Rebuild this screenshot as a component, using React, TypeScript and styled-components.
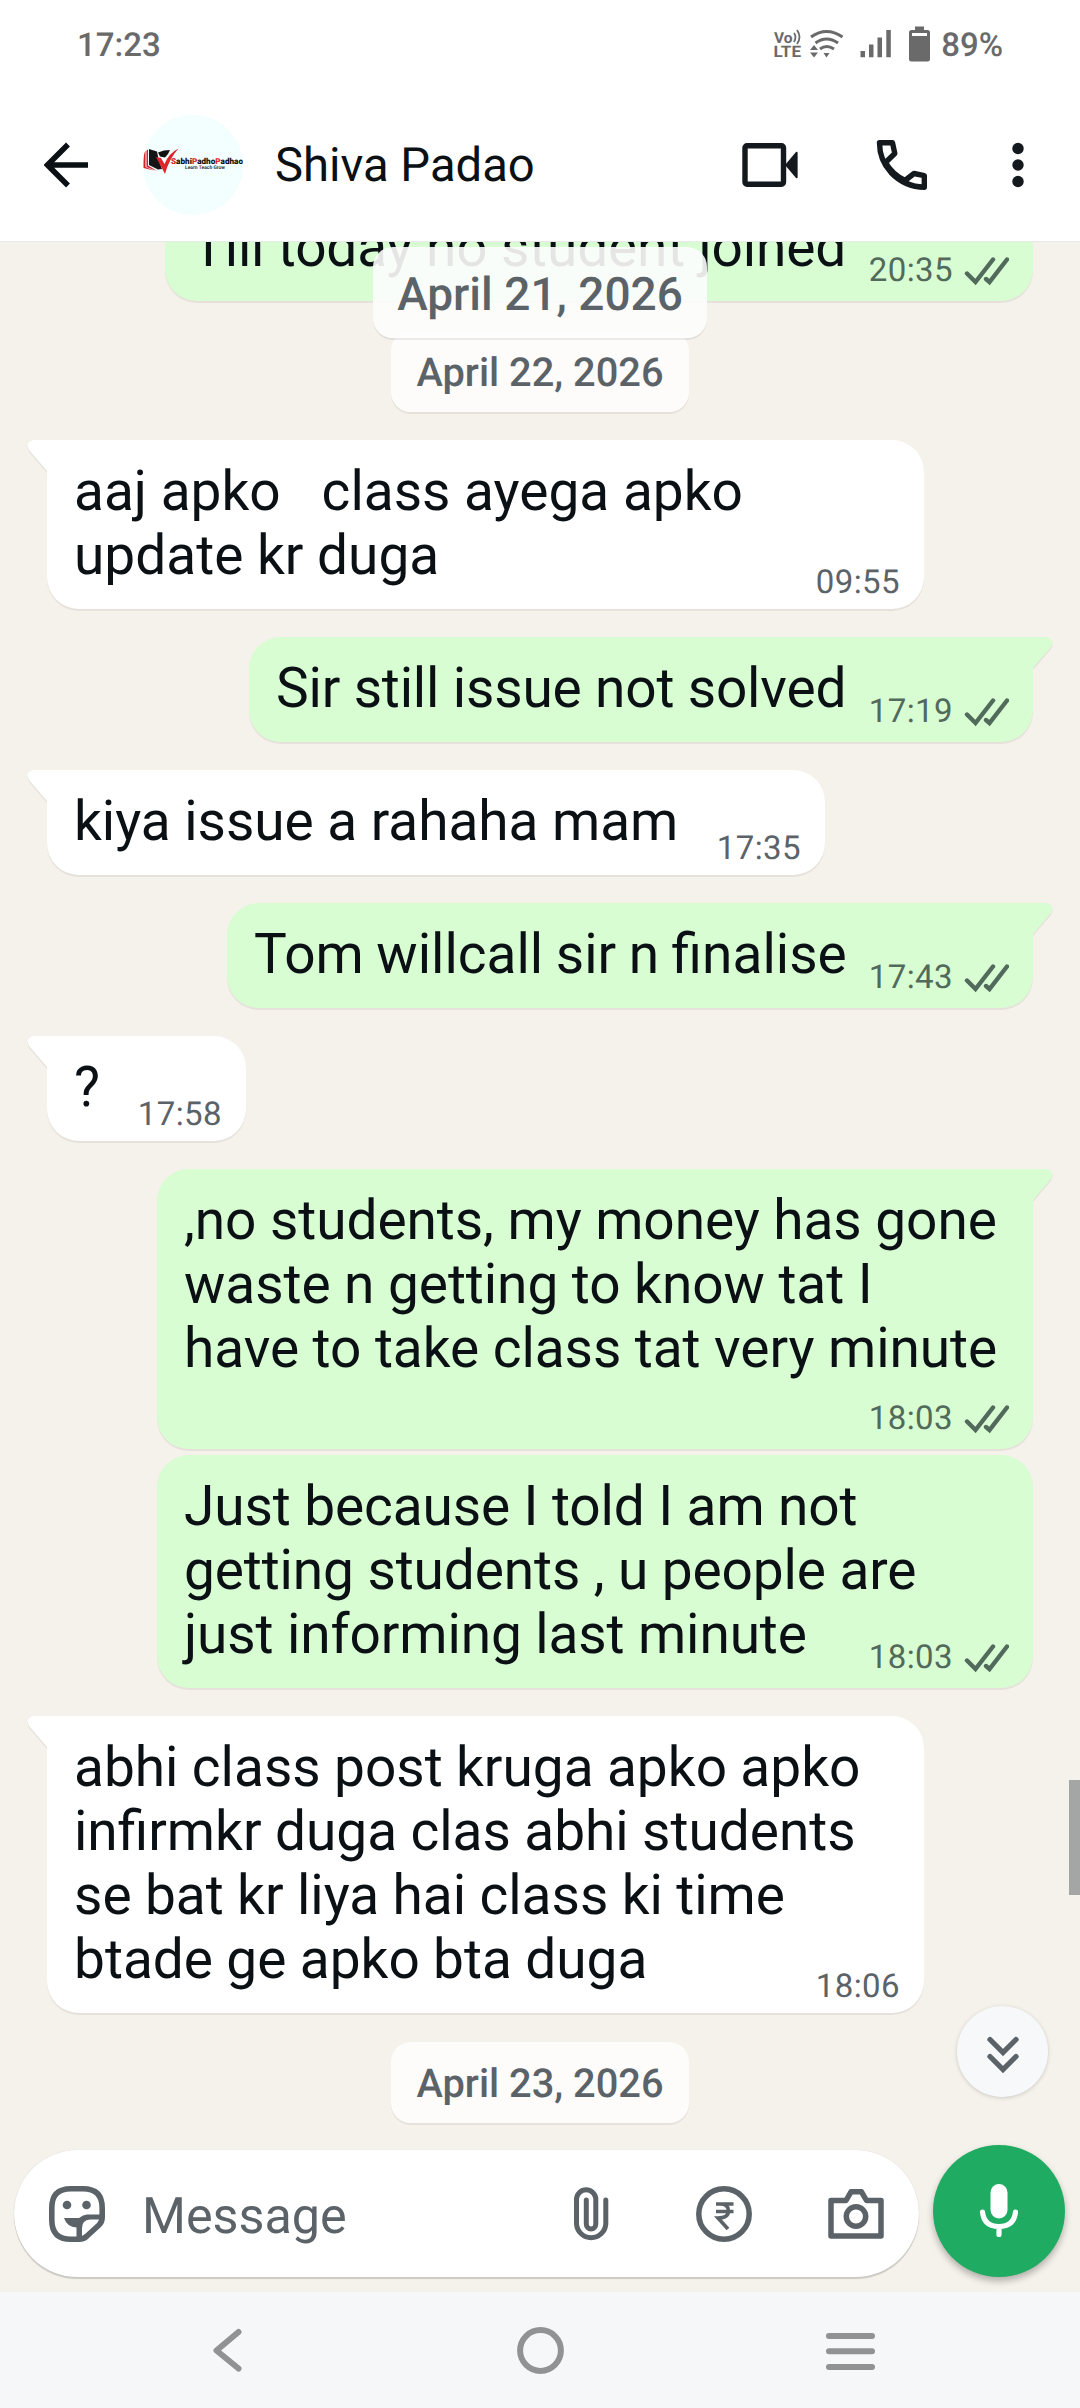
import React from "react";
import styled, { createGlobalStyle } from "styled-components";

const INK = "#0a1014";
const GREY = "#5b6368";

const GlobalStyle = createGlobalStyle`
  * { box-sizing: border-box; }
  body { margin: 0; background: #f5f1eb; }
`;

const Screen = styled.div`
  position: relative;
  display: flex;
  flex-direction: column;
  width: 1080px;
  height: 2408px;
  overflow: hidden;
  background: #f5f1eb;
  font-family: Roboto, "Liberation Sans", sans-serif;
  text-rendering: geometricPrecision;
  color: ${INK};
`;

const StatusBar = styled.div`
  display: flex;
  align-items: center;
  height: 90px;
  padding: 2px 77px 0 77px;
  background: #fff;
  color: #6a6a6a;
  font-size: 33px;
  font-weight: 500;
  line-height: 40px;
`;

const StatusIcons = styled.div`
  display: flex;
  align-items: center;
  gap: 9px;
  margin-left: auto;
`;

const Header = styled.header`
  display: flex;
  align-items: center;
  height: 152px;
  padding: 0 54px 2px 44px;
  background: #fff;
  border-bottom: 1px solid #e9e9e9;
`;

const Avatar = styled.div`
  display: flex;
  width: 100px;
  height: 100px;
  margin-left: 55px;
  border-radius: 50%;
  overflow: hidden;
  background: #f2fffe;
`;

const ContactName = styled.div`
  flex: 1;
  margin-left: 32px;
  font-size: 47.2px;
  line-height: 54px;
  white-space: nowrap;
`;

const HeaderActions = styled.div`
  display: flex;
  align-items: center;
`;

const Conversation = styled.main`
  position: relative;
  display: flex;
  flex-direction: column;
  align-items: flex-start;
  height: 2050px;
  overflow: hidden;
`;

const Bubble = styled.div<{ $out?: boolean; $w: number; $gap?: number; $tail?: boolean; $extra?: number }>`
  position: relative;
  display: grid;
  flex: none;
  width: ${(p) => p.$w}px;
  margin-top: ${(p) => p.$gap ?? 28}px;
  margin-left: ${(p) => (p.$out ? "auto" : "47px")};
  margin-right: ${(p) => (p.$out ? "47px" : "0")};
  padding: 19px 24px ${(p) => 22 + (p.$extra ?? 0)}px 27px;
  border-radius: 32px;
  ${(p) => p.$tail && (p.$out ? "border-top-right-radius: 0;" : "border-top-left-radius: 0;")}
  background: ${(p) => (p.$out ? "#d8fdd2" : "#fff")};
  box-shadow: 0 2px 0 #e6e2db;
`;

const Body = styled.div<{ $track?: number; $words?: number }>`
  grid-area: 1 / 1;
  font-size: 55px;
  line-height: 64px;
  letter-spacing: ${(p) => (p.$track ? `${p.$track}px` : "normal")};
  word-spacing: ${(p) => (p.$words ? `${p.$words}px` : "normal")};
  text-rendering: auto;
  white-space: pre;
`;

const Meta = styled.div<{ $out?: boolean; $extra?: number }>`
  grid-area: 1 / 1;
  display: flex;
  align-self: end;
  justify-self: end;
  align-items: center;
  gap: 11px;
  height: 38px;
  margin-bottom: ${(p) => (p.$out ? -11 : -15) - (p.$extra ?? 0)}px;
  color: ${(p) => (p.$out ? "#526a5b" : GREY)};
  font-size: 33px;
  letter-spacing: 0.4px;
  line-height: 38px;
`;

const TailShape = styled.svg<{ $out?: boolean }>`
  position: absolute;
  top: 0;
  ${(p) => (p.$out ? "right: -20px;" : "left: -20px; transform: scaleX(-1);")}
  overflow: visible;
`;

const DatePill = styled.div<{ $gap: number }>`
  flex: none;
  align-self: center;
  width: 298px;
  height: 81px;
  margin-top: ${(p) => p.$gap}px;
  border-radius: 20px;
  background: rgba(255, 255, 255, 0.8);
  box-shadow: 0 2px 0 #e6e2db;
  color: ${GREY};
  font-size: 39.8px;
  font-weight: 500;
  line-height: 84px;
  text-align: center;
`;

const FloatingDate = styled.div`
  position: absolute;
  top: 5px;
  left: 373px;
  width: 334px;
  height: 91px;
  border-radius: 20px;
  background: rgba(253, 253, 253, 0.9);
  box-shadow: 0 2px 0 rgba(0, 0, 0, 0.07);
  color: ${GREY};
  font-size: 46px;
  font-weight: 500;
  line-height: 96px;
  text-align: center;
`;

const ScrollThumb = styled.div`
  position: absolute;
  top: 1538px;
  right: 0;
  width: 11px;
  height: 115px;
  background: #a3a6a5;
`;

const JumpButton = styled.div`
  position: absolute;
  top: 1764px;
  left: 957px;
  display: flex;
  align-items: center;
  justify-content: center;
  width: 91px;
  height: 91px;
  padding-top: 5px;
  border-radius: 50%;
  background: #f7f8f9;
  box-shadow: 0 1px 4px rgba(0, 0, 0, 0.16);
`;

const Composer = styled.div`
  position: absolute;
  left: 0;
  right: 0;
  bottom: 0;
  display: flex;
  align-items: flex-start;
  height: 147px;
  padding: 0 15px 0 14px;
`;

const InputBox = styled.div`
  display: flex;
  align-items: center;
  width: 905px;
  height: 127px;
  margin-top: 5px;
  padding: 0 35px;
  border-radius: 64px;
  background: #fff;
  box-shadow: 0 2px 1px rgba(0, 0, 0, 0.16), 0 0 1px rgba(0, 0, 0, 0.15);
`;

const Placeholder = styled.div`
  flex: 1;
  margin-left: 37px;
  padding-top: 6px;
  color: ${GREY};
  font-size: 50.3px;
  line-height: 60px;
`;

const InputActions = styled.div`
  display: flex;
  align-items: center;
`;

const MicButton = styled.div`
  display: flex;
  align-items: center;
  justify-content: center;
  width: 132px;
  height: 132px;
  margin-left: 14px;
  border-radius: 50%;
  background: #1fab61;
  box-shadow: 0 4px 7px rgba(0, 0, 0, 0.28);
`;

const NavBar = styled.nav`
  display: flex;
  flex: none;
  height: 116px;
  background: #f6f7f9;
`;

const NavIcon = styled.svg`
  flex: none;
`;

const Ticks = () => (
  <svg width="45" height="30" viewBox="0 0 45 30" fill="none" stroke="#526a5b" strokeWidth="4.4" strokeLinecap="round">
    <path d="M3 17.5 L11.5 26 L29 3.500" strokeLinejoin="miter" />
    <path d="M22 23 L25.5 26 L43 3.500" strokeLinejoin="miter" />
  </svg>
);

const Tail = ({ out }: { out?: boolean }) => (
  <TailShape $out={out} width="21" height="36" viewBox="0 0 21 36">
    <path d="M0 2 H15 Q23 4 19 12 L1 33 H0 Z" fill="#e6e2db" />
    <path d="M0 0 H15 Q23 2 19 10 L1 31 V34 H0 Z" fill={out ? "#d8fdd2" : "#fff"} />
  </TailShape>
);

interface Msg {
  text: string;
  time: string;
  out?: boolean;
  w: number;
  gap?: number;
  tail?: boolean;
  extra?: number;
  track?: number;
  words?: number;
}

const Message = ({ text, time, out, w, gap, tail = true, extra, track, words }: Msg) => (
  <Bubble $out={out} $w={w} $gap={gap} $tail={tail} $extra={extra}>
    {tail && <Tail out={out} />}
    <Body $track={track} $words={words}>{text}</Body>
    <Meta $out={out} $extra={extra}>
      <span>{time}</span>
      {out && <Ticks />}
    </Meta>
  </Bubble>
);

const thread: Msg[] = [
  { text: "aaj apko   class ayega apko\nupdate kr duga", time: "09:55", w: 877 },
  { text: "Sir still issue not solved", time: "17:19", out: true, w: 784, track: -0.17 },
  { text: "kiya issue a rahaha mam", time: "17:35", w: 778, track: -0.04 },
  { text: "Tom willcall sir n finalise", time: "17:43", out: true, w: 806, words: -1.1 },
  { text: "?", time: "17:58", w: 199 },
  {
    text: ",no students, my money has gone\nwaste n getting to know tat I\nhave to take class tat very minute",
    time: "18:03", out: true, w: 876, extra: 47, track: -0.06,
  },
  {
    text: "Just because I told I am not\ngetting students , u people are\njust informing last minute",
    time: "18:03", out: true, w: 876, tail: false, gap: 6, track: -0.11,
  },
  {
    text: "abhi class post kruga apko apko\ninfirmkr duga clas abhi students\nse bat kr liya hai class ki time\nbtade ge apko bta duga",
    time: "18:06", w: 877, words: -0.3,
  },
];

const NetworkIcons = () => (
  <svg width="160" height="40" viewBox="772 26 160 40" fill="#6a6a6a" fontFamily="Roboto, sans-serif">
    <text x="774" y="42.500" fontSize="15" fontWeight="700" textLength="18.500" lengthAdjust="spacingAndGlyphs">Vo</text>
    <g fill="none" stroke="#6a6a6a" strokeWidth="1.8">
      <path d="M794 33 Q797 37 794 42 M797 30 Q802 37 797 44" />
    </g>
    <text x="773.500" y="57.300" fontSize="16" fontWeight="700" textLength="27.500" lengthAdjust="spacingAndGlyphs">LTE</text>
    <g fill="none" stroke="#6a6a6a" strokeWidth="3">
      <path d="M811 37 Q826.500 26 842.500 37 M815.500 43 Q826.500 35 838 43 M820 49 Q826.500 44 834 49" />
    </g>
    <path d="M823.500 53 h6 l-3 4.500z M810 50 l4-5 4 5z M810 52.500 h8 l-4 5z" />
    <path d="M860.500 51 h4.500 v6.300 h-4.500z M869 44.500 h4.500 v12.800 h-4.500z M877.500 37.500 h4.500 v19.800 h-4.500z M886.300 30 h4.500 v27.300 h-4.500z" />
    <path fillRule="evenodd" d="M915 26.500 h9 v3.500 h3.500 a2.500 2.500 0 0 1 2.500 2.500 v26.500 a2.500 2.500 0 0 1 -2.500 2.500 h-16 a2.500 2.500 0 0 1 -2.500 -2.500 v-26.500 a2.500 2.500 0 0 1 2.500 -2.500 h3.500z M912 33 v3 h15 v-3z" />
  </svg>
);

const Logo = () => (
  <svg width="100" height="100" viewBox="0 0 100 100">
    <path d="M0.500 38 L2.500 36 V52 L11 55.500 L0.500 53z" fill="#d8232a" />
    <path d="M3.500 35.500 L5 34.500 V50.500 L14 56 L3.500 52z" fill="#d8232a" />
    <path d="M6 34 L14 36.500 L16 46 L19 54 L15 54.500 L6 50z" fill="#151515" />
    <path d="M15 37.500 L21 35.500 L27 35 L25 39 L22 42.500 L17 41.500z" fill="#111" />
    <path d="M13 42 L18 43 L21.500 49 Q26 38 35.500 33.500 Q26 44 22 59z" fill="#e0262c" />
    <text x="28" y="48.500" fontFamily="Roboto, sans-serif" fontSize="8.200" fontWeight="900" fill="#111" textLength="72" lengthAdjust="spacingAndGlyphs">
      <tspan fill="#e0262c">S</tspan>abhi<tspan fill="#e0262c">P</tspan>adho<tspan fill="#e0262c">P</tspan>adhao
    </text>
    <text x="42" y="53.600" fontFamily="Roboto, sans-serif" fontSize="5" fontWeight="700" fill="#333" textLength="40" lengthAdjust="spacingAndGlyphs">Learn <tspan fill="#a33">T</tspan>each Grow</text>
  </svg>
);

export default function App() {
  return (
    <Screen>
      <GlobalStyle />
      <StatusBar>
        <span>17:23</span>
        <StatusIcons>
          <NetworkIcons />
          <span>89%</span>
        </StatusIcons>
      </StatusBar>
      <Header>
        <svg width="44" height="46" viewBox="0 0 44 46" fill="none" stroke={INK} strokeWidth="5.500">
          <path d="M24 2.500 L3.500 23 L24 43.500 M3.500 23 H44" />
        </svg>
        <Avatar><Logo /></Avatar>
        <ContactName>Shiva Padao</ContactName>
        <HeaderActions>
          <svg width="284" height="60" viewBox="743 135 284 60" fill="#13191d">
            <rect x="746" y="145.700" width="38.500" height="38.600" rx="2" fill="none" stroke="#13191d" strokeWidth="5.400" />
            <path d="M786 165 L797 152 Q798.600 151 798.600 153 V177 Q798.600 179 797 178z" />
            <path fill="none" stroke="#13191d" strokeWidth="5.400" strokeLinejoin="round" d="M880.500 142.800 H893.500 L895.800 153.500 L886.500 162.500 Q893 174 906 180.500 L915 173.500 L925.300 175.600 V187.200 Q906 187 892 172.500 Q880.500 160 880.500 142.800z M887.500 162 L884 164 M906 179.500 L904 183" />
            <circle cx="1019" cy="148.500" r="5.700" /><circle cx="1019" cy="165" r="5.700" /><circle cx="1019" cy="181.500" r="5.700" />
          </svg>
        </HeaderActions>
      </Header>
      <Conversation>
        <Message text="Till today no student joined" time="20:35" out w={868} gap={-46} track={-0.15} />
        <DatePill $gap={30}>April 22, 2026</DatePill>
        {thread.map((m, i) => <Message key={i} {...m} />)}
        <DatePill $gap={29}>April 23, 2026</DatePill>
        <FloatingDate>April 21, 2026</FloatingDate>
        <ScrollThumb />
        <JumpButton>
          <svg width="34" height="38" viewBox="0 0 34 38" fill="none" stroke={GREY} strokeWidth="5.300" strokeLinecap="round">
            <path d="M4 4.500 L17 17.500 L30 4.500 M4 21.500 L17 34.500 L30 21.500" />
          </svg>
        </JumpButton>
        <Composer>
          <InputBox>
            <svg width="56" height="56" viewBox="0 0 56 56" fill="none" stroke={GREY} strokeWidth="5.600">
              <path d="M22 2.800 H34 Q53.200 2.800 53.200 22 V31 Q53.200 36 50 39 L38 50 Q35 53.200 30 53.200 H22 Q2.800 53.200 2.800 34 V22 Q2.800 2.800 22 2.800z" />
              <circle cx="18" cy="19" r="4.300" fill={GREY} stroke="none" /><circle cx="37.500" cy="19" r="4.300" fill={GREY} stroke="none" />
              <path d="M15 32 H30 Q34 28.500 38 28.500 H53 V33.500 H41 Q33 34 33 42 V52 H27.500 V41.500 Q18 41 15 32z" fill={GREY} stroke="none" />
            </svg>
            <Placeholder>Message</Placeholder>
            <InputActions>
              <svg width="311" height="56" viewBox="573 2186 311 56" fill="none" stroke={GREY} strokeWidth="5.500">
                <path strokeLinecap="round" d="M605.800 2200 V2224 A14.700 15 0 0 1 576.500 2224 V2198.500 A9.700 9.700 0 0 1 595.800 2198.500 V2224 A4.700 5 0 0 1 586.300 2224 V2200" strokeWidth="5" />
                <circle cx="724" cy="2214" r="25.200" />
                <path d="M716 2204 H733.500 M716 2211.500 H733.500 M716 2204 H720 Q728.500 2204 728.500 2211 Q728.500 2218 718 2218 L728 2229" strokeWidth="3.600" />
                <path d="M831 2200.500 H846 L851 2191.800 H861.500 L866.500 2200.500 H881 V2236 H831z" strokeLinejoin="round" />
                <circle cx="856" cy="2216.500" r="9.700" />
              </svg>
            </InputActions>
          </InputBox>
          <MicButton>
            <svg width="40" height="56" viewBox="0 0 40 56" fill="none" stroke="#fff">
              <rect x="11.500" y="1" width="17" height="34.500" rx="8.500" fill="#fff" stroke="none" />
              <path d="M3.500 29 Q5 43.500 20 43.500 Q35 43.500 36.500 29 M20 43.500 V51.500" strokeWidth="5.200" strokeLinecap="round" />
            </svg>
          </MicButton>
        </Composer>
      </Conversation>
      <NavBar>
        <NavIcon width="1080" height="116" viewBox="0 2292 1080 116" fill="none" stroke="#919293" strokeWidth="6" strokeLinecap="round">
          <path d="M238.500 2332 L216.500 2350.500 L238.500 2368.500" strokeLinejoin="round" />
          <circle cx="540.500" cy="2350.500" r="20.400" />
          <path d="M829 2336 H872 M829 2351.300 H872 M829 2366.900 H872" />
        </NavIcon>
      </NavBar>
    </Screen>
  );
}
